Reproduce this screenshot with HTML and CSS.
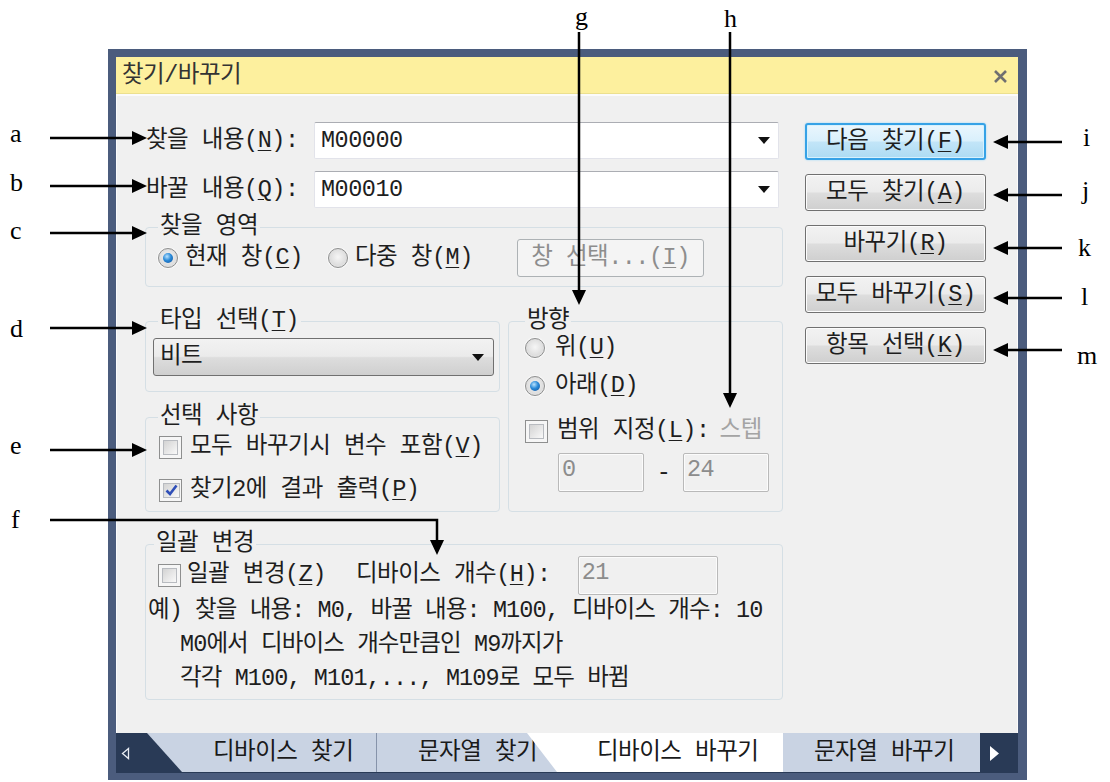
FILE: index.html
```html
<!DOCTYPE html>
<html lang="ko">
<head>
<meta charset="UTF-8">
<title>찾기/바꾸기</title>
<link rel="stylesheet" href="styles.css">
</head>
<body>
<div class="dialog">
  <div class="titlebar">
    <span class="title">찾기/바꾸기</span>
    <svg class="close" width="15" height="15" viewBox="0 0 15 15"><path d="M2 2L13 13M13 2L2 13" stroke="#707070" stroke-width="2.6"/></svg>
  </div>
  <div class="content">
    <div class="main">
      <div class="field">
        <span class="lbl">찾을 내용(<u>N</u>):</span>
        <div class="combo"><span>M00000</span><i class="caret"></i></div>
      </div>
      <div class="field">
        <span class="lbl">바꿀 내용(<u>Q</u>):</span>
        <div class="combo"><span>M00010</span><i class="caret"></i></div>
      </div>

      <fieldset class="group area">
        <legend>찾을 영역</legend>
        <div class="area-row">
          <span class="radio on"></span><span class="opt w1">현재 창(<u>C</u>)</span>
          <span class="radio"></span><span class="opt w2">다중 창(<u>M</u>)</span>
          <div class="btn disabled pick">창 선택...(<u>I</u>)</div>
        </div>
      </fieldset>

      <div class="middle">
        <div class="left-col">
          <fieldset class="group type">
            <legend>타입 선택(<u>T</u>)</legend>
            <div class="select"><span>비트</span><i class="caret"></i></div>
          </fieldset>
          <fieldset class="group options">
            <legend>선택 사항</legend>
            <div class="check-row first"><span class="check"><i></i></span><span class="opt">모두 바꾸기시 변수 포함(<u>V</u>)</span></div>
            <div class="check-row second"><span class="check"><i><svg width="15" height="15" viewBox="0 0 15 15"><path d="M2.5 7.5L6 11L12.5 2.5" fill="none" stroke="#2f4fb8" stroke-width="2.6"/></svg></i></span><span class="opt">찾기2에 결과 출력(<u>P</u>)</span></div>
          </fieldset>
        </div>
        <fieldset class="group dir">
          <legend>방향</legend>
          <div class="dir-row up"><span class="radio"></span><span class="opt">위(<u>U</u>)</span></div>
          <div class="dir-row down"><span class="radio on"></span><span class="opt">아래(<u>D</u>)</span></div>
          <div class="dir-row range"><span class="check"><i></i></span><span class="opt">범위 지정(<u>L</u>):</span><span class="step">스텝</span></div>
          <div class="range-row">
            <div class="input">0</div>
            <span class="dash">-</span>
            <div class="input">24</div>
          </div>
        </fieldset>
      </div>

      <fieldset class="group batch">
        <legend>일괄 변경</legend>
        <div class="batch-row">
          <span class="check"><i></i></span><span class="opt">일괄 변경(<u>Z</u>)</span>
          <span class="count">디바이스 개수(<u>H</u>):</span>
          <div class="input wide">21</div>
        </div>
        <p class="example">예) 찾을 내용: M0, 바꿀 내용: M100, 디바이스 개수: 10</p>
        <p class="example indent">M0에서 디바이스 개수만큼인 M9까지가</p>
        <p class="example indent">각각 M100, M101,..., M109로 모두 바뀜</p>
      </fieldset>
    </div>

    <div class="buttons">
      <div class="btn default">다음 찾기(<u>F</u>)</div>
      <div class="btn">모두 찾기(<u>A</u>)</div>
      <div class="btn">바꾸기(<u>R</u>)</div>
      <div class="btn">모두 바꾸기(<u>S</u>)</div>
      <div class="btn">항목 선택(<u>K</u>)</div>
    </div>
  </div>

  <div class="tabs">
    <div class="tab-nav prev"><svg width="9" height="13" viewBox="0 0 9 13"><polygon points="7.5,1.5 1.5,6.5 7.5,11.5" fill="none" stroke="#e8ecf3" stroke-width="1.3"/></svg></div>
    <div class="tab t1">디바이스 찾기</div>
    <div class="tab t2">문자열 찾기</div>
    <div class="tab t3 active">디바이스 바꾸기</div>
    <div class="tab t4">문자열 바꾸기</div>
    <div class="tab-nav next"><svg width="11" height="17" viewBox="0 0 11 17"><polygon points="1,1 10,8.5 1,16" fill="#ffffff"/></svg></div>
  </div>
</div>

<svg class="notes" width="1110" height="782" viewBox="0 0 1110 782">
  <g class="lines" stroke="#000" stroke-width="2.5" fill="none">
    <line x1="50" y1="138" x2="134" y2="138"/>
    <line x1="50" y1="186" x2="134" y2="186"/>
    <line x1="50" y1="233" x2="134" y2="233"/>
    <line x1="50" y1="328" x2="134" y2="328"/>
    <line x1="50" y1="450" x2="134" y2="450"/>
    <polyline points="50,520 437,520 437,542"/>
    <line x1="579" y1="32" x2="579" y2="292"/>
    <line x1="730" y1="32" x2="730" y2="395"/>
    <line x1="1062" y1="142" x2="1006" y2="142"/>
    <line x1="1062" y1="195" x2="1006" y2="195"/>
    <line x1="1062" y1="248" x2="1006" y2="248"/>
    <line x1="1062" y1="298" x2="1006" y2="298"/>
    <line x1="1062" y1="350" x2="1006" y2="350"/>
  </g>
  <g fill="#000">
    <polygon points="132,131 147,138 132,145"/>
    <polygon points="132,179 147,186 132,193"/>
    <polygon points="132,226 147,233 132,240"/>
    <polygon points="132,321 147,328 132,335"/>
    <polygon points="132,443 147,450 132,457"/>
    <polygon points="430,540 444,540 437,555"/>
    <polygon points="572,290 586,290 579,305"/>
    <polygon points="723,393 737,393 730,408"/>
    <polygon points="1008,135 993,142 1008,149"/>
    <polygon points="1008,188 993,195 1008,202"/>
    <polygon points="1008,241 993,248 1008,255"/>
    <polygon points="1008,291 993,298 1008,305"/>
    <polygon points="1008,343 993,350 1008,357"/>
  </g>
  <g class="letters">
    <text x="10" y="142">a</text>
    <text x="10" y="191">b</text>
    <text x="10" y="239">c</text>
    <text x="10" y="337">d</text>
    <text x="10" y="454">e</text>
    <text x="11" y="528">f</text>
    <text x="575" y="25">g</text>
    <text x="724" y="27">h</text>
    <text x="1083" y="146">i</text>
    <text x="1082" y="199">j</text>
    <text x="1078" y="256">k</text>
    <text x="1081" y="305">l</text>
    <text x="1077" y="364">m</text>
  </g>
</svg>
</body>
</html>
```

FILE: styles.css
```css
*{
	margin:0;
	padding:0;
	box-sizing:border-box;
}
html,body{
	width:100%;
	height:100%;
	overflow:hidden;
	background:#fff;
}
body{
	position:relative;
	font-family:"Liberation Mono","Noto Sans CJK KR",monospace;
	font-size:23.5px;
	letter-spacing:-0.5px;
	line-height:26px;
	color:#1e1e1e;
}
u{
	text-decoration:underline;
	text-decoration-thickness:1px;
	text-underline-offset:3px;
}

/* window frame */
.dialog{
	width:919px;
	height:731px;
	margin:49px 0 0 108px;
	background:#4b5c7d;
	padding:8px 9px 7px 8px;
	display:flex;
	flex-direction:column;
}
.titlebar{
	height:37px;
	flex:none;
	background:#fdf09e;
	border-bottom:1px solid #ece08f;
	display:flex;
	align-items:center;
	justify-content:space-between;
	padding:2px 10px 0 6px;
}
.title{
	color:#333;
}
.close{
	display:block;
}
.content{
	flex:1;
	background:#f0f0f0;
	border-top:2px solid #fbfbfb;
	border-left:1px solid #fbfbfb;
	border-right:1px solid #fbfbfb;
	display:flex;
	padding:26px 31px 0 28px;
}
.main{
	width:638px;
	flex:none;
}

/* top combo rows */
.field{
	display:flex;
	align-items:center;
	height:37px;
}
.field + .field{
	margin-top:12px;
}
.lbl{
	width:169px;
	padding-left:1px;
	white-space:nowrap;
}
.combo{
	width:465px;
	height:37px;
	background:#fff;
	border:1px solid #e2e3ea;
	border-top-color:#abadb3;
	border-radius:2px;
	display:flex;
	align-items:center;
	justify-content:space-between;
	padding:0 8px 0 6px;
}
.caret{
	width:0;
	height:0;
	border-left:6px solid transparent;
	border-right:6px solid transparent;
	border-top:7px solid #111;
}

/* group boxes */
.group{
	border:1px solid #d5dfe5;
	border-radius:4px;
	min-width:0;
}
.group legend{
	margin-left:12px;
	padding:0 2px;
	line-height:24px;
}
.area{
	margin-top:7px;
	padding-bottom:9px;
}
.area-row{
	display:flex;
	align-items:center;
	height:38px;
	padding-left:12px;
}
.opt{
	margin-left:7px;
	white-space:nowrap;
}
.w1{
	width:143px;
}
.w2{
	width:162px;
}

/* radio & checkbox */
.radio{
	width:20px;
	height:20px;
	flex:none;
	border-radius:50%;
	border:1px solid #8e8f8f;
	background:radial-gradient(circle at 50% 45%,#f6f6f6 0,#dedede 60%,#ececec 100%);
	box-shadow:0 0 0 1px #f7f7f7;
	display:flex;
	align-items:center;
	justify-content:center;
}
.radio.on::after{
	content:'';
	width:10px;
	height:10px;
	border-radius:50%;
	background:radial-gradient(circle at 40% 35%,#b9e3ff 0,#2a8ad8 45%,#0d4f9b 100%);
}
.check{
	width:23px;
	height:23px;
	flex:none;
	border:1px solid #8e8f8f;
	background:#f6f6f6;
	padding:3px;
	display:flex;
}
.check i{
	flex:1;
	border:1px solid #b8bbc0;
	background:linear-gradient(135deg,#d3d3d3,#f9f9f9);
	display:flex;
	align-items:center;
	justify-content:center;
}
.check svg{
	display:block;
}

/* buttons */
.btn{
	height:37px;
	border:1px solid #707070;
	border-radius:3px;
	background:linear-gradient(#f2f2f2 0,#ebebeb 48%,#dddddd 52%,#cfcfcf 100%);
	box-shadow:inset 0 0 0 1px #fcfcfc;
	display:flex;
	align-items:center;
	justify-content:center;
	white-space:nowrap;
}
.btn.default{
	border:2px solid #36a2e6;
	background:linear-gradient(#eaf6fd 0,#d9f0fc 48%,#c2e5f8 52%,#addbf3 100%);
	box-shadow:0 0 2px #8fd3fb, inset 0 0 0 1px #d6f1fd;
}
.btn.disabled{
	border-color:#adb2b5;
	background:#f4f4f4;
	color:#8d8d8d;
	box-shadow:none;
}
.pick{
	width:187px;
	height:38px;
}
.buttons{
	width:181px;
	flex:none;
	margin-left:22px;
	padding-top:1px;
	display:flex;
	flex-direction:column;
	gap:14px;
}

/* middle block */
.middle{
	display:grid;
	grid-template-columns:355px 275px;
	column-gap:8px;
	align-items:start;
	margin-top:22px;
}
.left-col{
	display:flex;
	flex-direction:column;
	gap:13px;
}
.type{
	padding-bottom:15px;
}
.select{
	height:38px;
	margin:5px 5px 0 7px;
	border:1px solid #707070;
	border-radius:3px;
	background:linear-gradient(#f2f2f2 0,#ebebeb 48%,#dddddd 52%,#cfcfcf 100%);
	display:flex;
	align-items:center;
	justify-content:space-between;
	padding:0 9px 0 6px;
}
.options{
	padding-bottom:7px;
}
.check-row{
	display:flex;
	align-items:center;
	height:28px;
	padding-left:13px;
}
.check-row .opt{
	margin-left:8px;
}
.check-row.first{
	margin-top:4px;
}
.check-row.second{
	margin-top:15px;
}
.dir{
	padding-bottom:19px;
}
.dir legend{
	margin-left:16px;
}
.dir-row{
	display:flex;
	align-items:center;
	height:30px;
	padding-left:16px;
}
.dir-row .opt{
	margin-left:10px;
}
.dir-row.down{
	margin-top:8px;
}
.dir-row.range{
	margin-top:15px;
}
.range .opt{
	margin-left:9px;
}
.step{
	margin-left:10px;
	color:#a4a4a4;
}
.range-row{
	display:flex;
	align-items:center;
	margin-top:7px;
	padding-left:49px;
}
.input{
	width:86px;
	height:39px;
	border:1px solid #b9b9b9;
	border-radius:2px;
	box-shadow:inset 0 0 0 1px #fbfbfb;
	color:#8c8c8c;
	padding:3px 0 0 3px;
	line-height:26px;
}
.dash{
	width:39px;
	text-align:center;
}

/* batch change */
.batch{
	margin-top:20px;
	padding-bottom:3px;
}
.batch legend{
	margin-left:8px;
}
.batch-row{
	display:flex;
	align-items:center;
	height:38px;
	padding-left:12px;
}
.batch-row .opt{
	margin-left:6px;
}
.count{
	margin-left:30px;
	white-space:nowrap;
}
.input.wide{
	width:140px;
	margin-left:27px;
}
.example{
	line-height:34px;
	padding-left:2px;
	letter-spacing:-0.9px;
	white-space:nowrap;
}
.example.indent{
	padding-left:34px;
}

/* sheet tabs */
.tabs{
	height:40px;
	flex:none;
	background:#293a56;
	display:flex;
}
.tab{
	height:39px;
	flex:none;
	display:flex;
	align-items:center;
	background:#c9d3e3;
	color:#1a1a1a;
	white-space:nowrap;
}
.tab-nav{
	display:flex;
	align-items:center;
}
.tab-nav.prev{
	width:31px;
	padding-left:5px;
}
.tab-nav.next{
	flex:1;
	padding-left:9px;
}
.t1{
	width:230px;
	padding-left:66px;
	border-right:1px solid #8693aa;
	clip-path:polygon(0 0,100% 0,100% 100%,35px 100%);
}
.t2{
	width:180px;
	padding-left:41px;
}
.t3{
	width:256px;
	margin-left:-30px;
	padding-left:70px;
	background:#fff;
	clip-path:polygon(0 0,100% 0,100% 100%,30px 100%);
}
.t4{
	width:197px;
	padding-left:31px;
}

/* annotation overlay */
.notes{
	position:absolute;
	left:0;
	top:0;
	pointer-events:none;
}
.letters text{
	font-family:"Liberation Serif",serif;
	font-size:26px;
	letter-spacing:0;
	fill:#000;
}
```
